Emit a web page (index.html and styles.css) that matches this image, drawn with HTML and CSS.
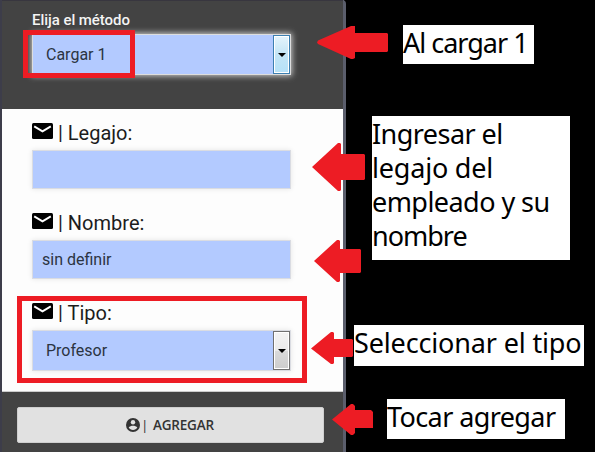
FILE: index.html
```
<!DOCTYPE html>
<html lang="es">
<head>
<meta charset="utf-8">
<title>Cargar empleado</title>
<link rel="stylesheet" href="styles.css">
</head>
<body>
<svg class="defs" width="0" height="0" aria-hidden="true">
  <symbol id="mail" viewBox="0 0 21 16"><rect width="21" height="16" rx="1.5"/><path d="M2.2 3.400 10.500 8.400 18.800 3.400" fill="none" stroke="#fff" stroke-width="1.9"/></symbol>
</svg>
<main class="panel">
  <header class="panel-header">
    <div class="method-label">Elija el método</div>
    <div class="field select active"><span class="value">Cargar 1</span><span class="drop"></span></div>
  </header>
  <section class="form">
    <div class="group">
      <div class="label"><svg class="mail"><use href="#mail"/></svg><span>| Legajo:</span></div>
      <div class="field"></div>
    </div>
    <div class="group">
      <div class="label"><svg class="mail"><use href="#mail"/></svg><span>| Nombre:</span></div>
      <div class="field"><span class="value">sin definir</span></div>
    </div>
    <div class="group">
      <div class="label"><svg class="mail"><use href="#mail"/></svg><span>| Tipo:</span></div>
      <div class="field select"><span class="value">Profesor</span><span class="drop"></span></div>
    </div>
  </section>
  <footer class="panel-footer">
    <div class="button">
      <svg class="user" viewBox="0 0 14 14"><circle cx="7" cy="7" r="7" fill="#333"/><circle cx="7" cy="4.3" r="2.2" fill="#e1e1e1"/><path d="M2.7 9.6C3.4 8.3 5.5 7.8 7 7.8s3.600.5 4.300 1.800C10.500 11.200 8.900 12 7 12S3.500 11.200 2.700 9.600Z" fill="#e1e1e1"/></svg>
      <span class="bar">|</span><span class="action">AGREGAR</span>
    </div>
  </footer>
</main>
<div class="mark mark-method"></div>
<div class="mark mark-type"></div>
<svg class="arrows" viewBox="0 0 595 452" aria-hidden="true">
  <path d="M317 42.500 318 40.500 351 26H355V33H387L388 34V51L387 52H355V58L353 59H351L318 44Z"/>
  <path d="M312 167 338 143H340L341 144V154H364L365 155V179L364 180H341V190L340 191H338Z"/>
  <path d="M314 261 337 240H339L340 241V249H360L361 250V272L360 273H340V281L339 282H337Z"/>
  <path d="M311 348.500 331 332H333L334 333V339H352L353 340V356L352 357H334V363L333 364H331Z"/>
  <path d="M332 419.500 351 404H353L355 406V410H371L373 412V428H355V433L353 435H351Z"/>
</svg>
<div class="note note-load">Al cargar 1</div>
<div class="note note-data"><span class="l1">Ingresar el</span><br><span class="l2">legajo del</span><br><span class="l3">empleado y su</span><br><span class="l4">nombre</span></div>
<div class="note note-type">Seleccionar el tipo</div>
<div class="note note-add">Tocar agregar</div>
</body>
</html>
```
FILE: styles.css
```
* { box-sizing: border-box; }
body {
  position: relative;
  width: 595px;
  height: 452px;
  margin: 0;
  overflow: hidden;
  background: #000;
  font-family: Roboto, sans-serif;
}
.defs { position: absolute; }
.panel {
  display: flex;
  flex-direction: column;
  width: 346px;
  height: 452px;
  border-left: 2px solid #3d3d4a;
  border-right: 3px solid #5b5e6c;
  border-top-right-radius: 4px;
  background: #fdfdfd;
}
.panel-header {
  flex: none;
  height: 109px;
  padding: 10px 52px 0 30px;
  border-top: 1px solid #38363f;
  background: #434343;
}
.method-label {
  height: 23px;
  color: #f4f4f4;
  font-size: 15px;
  font-weight: 500;
  line-height: 18px;
  letter-spacing: -0.05px;
}
.field {
  display: flex;
  align-items: center;
  width: 259px;
  height: 39px;
  padding-left: 9px;
  border: 1px solid #dadce2;
  background: #b3caff;
  box-shadow: 0 0 5px #e6e6e6;
  color: #2b3442;
  font-size: 16px;
}
.select { height: 41px; padding-left: 13px; }
.select .value { flex: 1; }
.drop {
  display: flex;
  align-items: center;
  justify-content: center;
  width: 17px;
  height: 39px;
  border: 1px solid #707070;
  background: linear-gradient(#f3f3f3, #ebebeb 50%, #dadada 51%, #cdcdcd);
  box-shadow: inset 0 0 0 1px #fff;
}
.drop::before {
  content: "";
  border: 4px solid transparent;
  border-top-color: #000;
  border-bottom-width: 0;
}
.active { border-color: #ddd; box-shadow: 0 0 6px 1px #ccc; }
.active .drop {
  border-color: #3c7fb1;
  background: linear-gradient(#e5f4fc, #c4e5f6 50%, #b5e1f8);
}
.form {
  display: flex;
  flex: none;
  flex-direction: column;
  height: 283px;
  padding: 11px 0 0 30px;
  border-bottom: 1px solid #ccc;
}
.group { height: 90px; flex: none; }
.label {
  display: flex;
  align-items: flex-start;
  height: 30px;
  gap: 5px;
  padding-top: 3px;
  color: #1c1c1c;
  font-size: 20px;
  font-weight: 400;
}
.label span { line-height: 20px; }
.mail { width: 21px; height: 16px; }
.panel-footer { flex: 1; padding: 15px 15px 0; background: #434343; }
.button {
  display: flex;
  align-items: center;
  width: 307px;
  height: 36px;
  padding-left: 108px;
  border: 1px solid #cfcfcf;
  border-radius: 2px;
  background: #e1e1e1;
  color: #333;
  font: 600 13.5px "Open Sans", sans-serif;
}
.user { width: 14px; height: 14px; }
.bar { width: 13px; padding-left: 1px; font-weight: 400; }
.action { letter-spacing: -0.2px; }
.mark { position: absolute; border: 5px solid #ed1c24; }
.mark-method { left: 23px; top: 30px; width: 112px; height: 48px; }
.mark-type { left: 17px; top: 296px; width: 290px; height: 87px; }
.arrows { position: absolute; inset: 0; width: 595px; height: 452px; fill: #ed1c24; }
.note {
  position: absolute;
  background: #fff;
  color: #000;
  font-family: "Noto Sans", sans-serif;
  font-size: 27px;
  line-height: 34px;
  white-space: nowrap;
}
.note-load { left: 403px; top: 25px; width: 131px; height: 39px; padding-top: 1px; letter-spacing: -1px; }
.note-data { left: 372px; top: 116px; width: 198px; height: 144px; padding-top: 1px; }
.l1, .l3 { letter-spacing: -0.55px; }
.l2 { letter-spacing: -0.2px; }
.l4 { letter-spacing: -1px; }
.note-type { left: 354px; top: 325px; width: 230px; height: 41px; padding-top: 1px; letter-spacing: -0.15px; }
.note-add { left: 387px; top: 399px; width: 178px; height: 40px; padding-top: 1px; letter-spacing: -0.6px; }
```
